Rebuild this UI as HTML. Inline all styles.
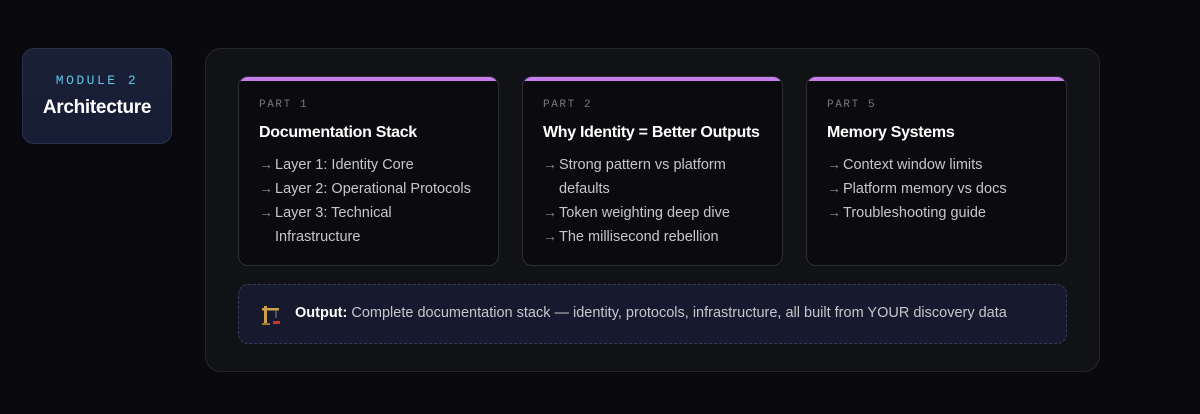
<!DOCTYPE html>
<html><head><style>
*{margin:0;padding:0;box-sizing:border-box}
body{width:1200px;height:414px;background:#0a0a0e;font-family:"Liberation Sans",sans-serif;position:relative;overflow:hidden}
.mod{position:absolute;left:22px;top:48px;width:150px;height:96px;border-radius:12px;background:linear-gradient(180deg,#1a2036,#161d35);border:1px solid #2a3150;text-align:center}
.mod .k{font-family:"Liberation Mono",monospace;color:#5fc7e8;font-size:13px;letter-spacing:2.5px;margin-top:24px}
.mod .t{color:#fff;font-weight:bold;font-size:19px;margin-top:9px;letter-spacing:-0.3px}
.wrap{position:absolute;left:205px;top:48px;width:895px;height:324px;border-radius:16px;background:#111216;border:1px solid #25262c}
.card{position:absolute;top:27px;width:261px;height:190px;border-radius:10px;background:#0b0b0f;border:1px solid #2d2e34;overflow:hidden}
.card:before{content:"";position:absolute;left:0;top:0;right:0;height:4px;background:#c77dec}
.p{font-family:"Liberation Mono",monospace;color:#77777d;font-size:11px;letter-spacing:1.6px;margin:22px 0 0 20px}
.h{color:#fff;font-weight:bold;font-size:16px;margin:13px 0 0 20px;letter-spacing:-0.3px}
ul{list-style:none;margin:11px 0 0 20px;color:#c6c6cc;font-size:14.5px;line-height:24px}
li{padding-left:16px;position:relative;width:222px}
li:before{content:"→";position:absolute;left:0;top:-1px;color:#8a8a90;font-size:14px}
.out{position:absolute;left:32px;top:235px;width:829px;height:60px;border-radius:10px;background:#171a2e;border:1px dashed #373b5a;color:#c6c6cc;font-size:14.5px;padding:20px 0 0 56px}
.out b{color:#fff}
</style></head><body>
<div class="mod"><div class="k">MODULE 2</div><div class="t">Architecture</div></div>
<div class="wrap">
<div class="card" style="left:32px"><div class="p">PART 1</div><div class="h">Documentation Stack</div>
<ul><li>Layer 1: Identity Core</li><li>Layer 2: Operational Protocols</li><li style="width:200px">Layer 3: Technical Infrastructure</li></ul></div>
<div class="card" style="left:316px"><div class="p">PART 2</div><div class="h">Why Identity = Better Outputs</div>
<ul><li>Strong pattern vs platform defaults</li><li>Token weighting deep dive</li><li>The millisecond rebellion</li></ul></div>
<div class="card" style="left:600px"><div class="p">PART 5</div><div class="h">Memory Systems</div>
<ul><li>Context window limits</li><li>Platform memory vs docs</li><li>Troubleshooting guide</li></ul></div>
<div class="out">
<svg style="position:absolute;left:22px;top:19px" width="20" height="22" viewBox="0 0 20 22"><rect x="3" y="2" width="3" height="18" fill="#c9a24a"/><rect x="1" y="4" width="17" height="2.5" fill="#c9a24a"/><line x1="15" y1="6" x2="15" y2="14" stroke="#888" stroke-width="1"/><rect x="12" y="17" width="7" height="3" fill="#c0392b"/><rect x="1" y="19" width="8" height="2" fill="#a07a30"/></svg>
<b>Output:</b> Complete documentation stack — identity, protocols, infrastructure, all built from YOUR discovery data</div>
</div>
</body></html>
